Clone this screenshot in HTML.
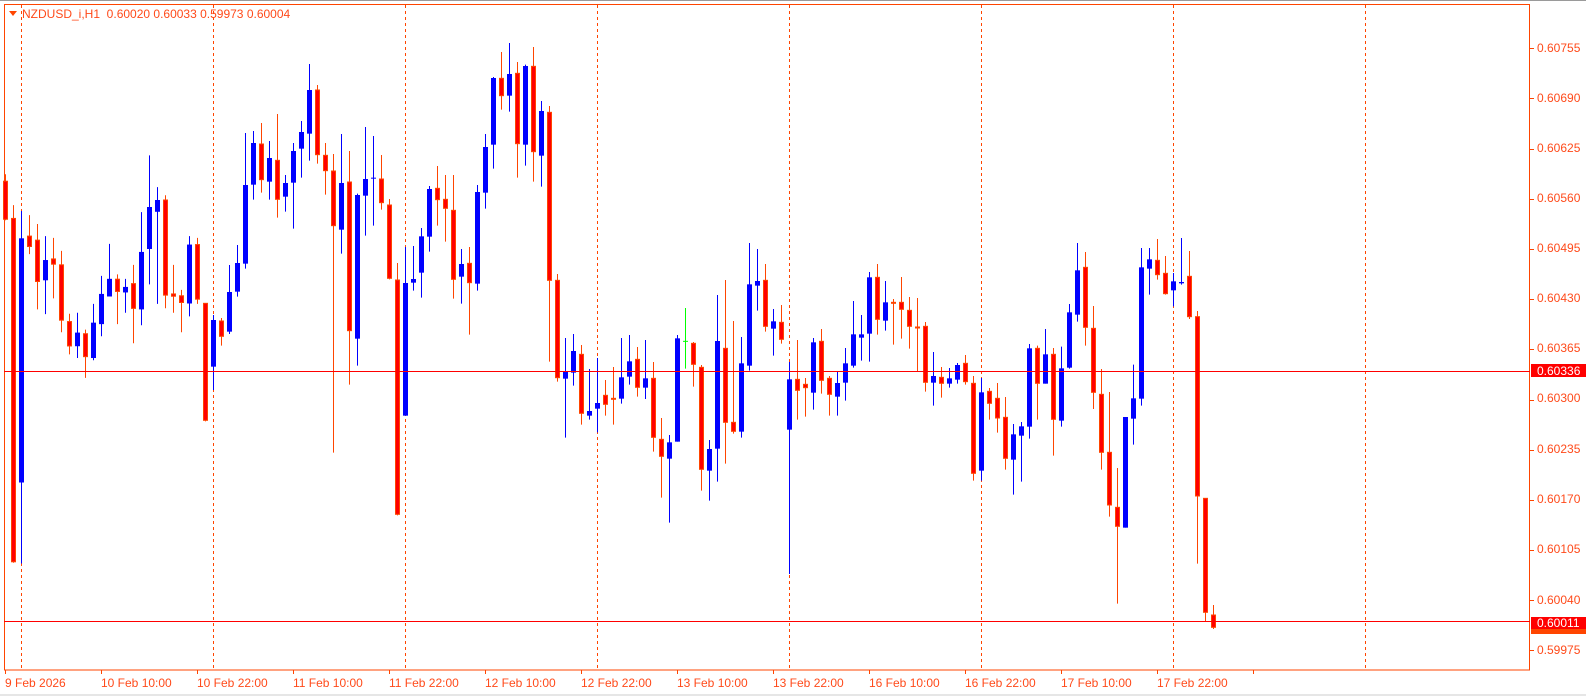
<!DOCTYPE html>
<html><head><meta charset="utf-8"><style>
html,body{margin:0;padding:0;background:#fff;width:1586px;height:696px;overflow:hidden;font-family:"Liberation Sans",sans-serif;}
.t{position:absolute;font-size:12px;color:#ff4a1a;white-space:nowrap;line-height:14px;}
</style></head><body>
<svg id="s" width="1586" height="696" style="position:absolute;left:0;top:0" xmlns="http://www.w3.org/2000/svg">
<rect x="0" y="0" width="1586" height="1" fill="#9a9a9a"/>
<rect x="0" y="694" width="1586" height="2" fill="#e6e6e6"/>
<rect x="4.5" y="4.5" width="1525" height="665.5" fill="none" stroke="#ff4500" stroke-width="1"/>
<g id="grid" stroke="#ff4500" stroke-width="1" stroke-dasharray="3,3"></g>
<g id="c"></g>
<line x1="4" y1="371.5" x2="1530" y2="371.5" stroke="#ff0000"/>
<line x1="4" y1="621.5" x2="1530" y2="621.5" stroke="#ff0000"/>
<g id="ticks" stroke="#ff4500"></g>
<polygon points="9,11 17,11 13,16" fill="#ff4500"/>
<rect x="1531" y="364" width="55" height="13" fill="#ff0000"/>
<rect x="1531" y="622" width="55" height="12" fill="#ff4500"/>
<rect x="1531" y="617" width="55" height="12" fill="#ff0000"/>
</svg>
<div class="t" style="left:22px;top:7px">NZDUSD_i,H1&nbsp; 0.60020 0.60033 0.59973 0.60004</div>
<div class="t" style="left:1537px;top:41px">0.60755</div>
<div class="t" style="left:1537px;top:91px">0.60690</div>
<div class="t" style="left:1537px;top:141px">0.60625</div>
<div class="t" style="left:1537px;top:191px">0.60560</div>
<div class="t" style="left:1537px;top:241px">0.60495</div>
<div class="t" style="left:1537px;top:291px">0.60430</div>
<div class="t" style="left:1537px;top:341px">0.60365</div>
<div class="t" style="left:1537px;top:391px">0.60300</div>
<div class="t" style="left:1537px;top:442px">0.60235</div>
<div class="t" style="left:1537px;top:492px">0.60170</div>
<div class="t" style="left:1537px;top:542px">0.60105</div>
<div class="t" style="left:1537px;top:593px">0.60040</div>
<div class="t" style="left:1537px;top:643px">0.59975</div>
<div class="t" style="left:1537px;top:364px;color:#fff">0.60336</div>
<div class="t" style="left:1537px;top:616px;color:#fff">0.60011</div>
<div class="t" style="left:5px;top:676px">9 Feb 2026</div>
<div class="t" style="left:101px;top:676px">10 Feb 10:00</div>
<div class="t" style="left:197px;top:676px">10 Feb 22:00</div>
<div class="t" style="left:293px;top:676px">11 Feb 10:00</div>
<div class="t" style="left:389px;top:676px">11 Feb 22:00</div>
<div class="t" style="left:485px;top:676px">12 Feb 10:00</div>
<div class="t" style="left:581px;top:676px">12 Feb 22:00</div>
<div class="t" style="left:677px;top:676px">13 Feb 10:00</div>
<div class="t" style="left:773px;top:676px">13 Feb 22:00</div>
<div class="t" style="left:869px;top:676px">16 Feb 10:00</div>
<div class="t" style="left:965px;top:676px">16 Feb 22:00</div>
<div class="t" style="left:1061px;top:676px">17 Feb 10:00</div>
<div class="t" style="left:1157px;top:676px">17 Feb 22:00</div>
<script>
var NS="http://www.w3.org/2000/svg";
function el(p,n,a){var e=document.createElementNS(NS,n);for(var k in a)e.setAttribute(k,a[k]);p.appendChild(e);return e;}
var g=document.getElementById('grid');
for(var i=0;i<8;i++){var x=21.5+192*i;el(g,'line',{x1:x,y1:5,x2:x,y2:670});}
var tk=document.getElementById('ticks');
for(var i=0;i<13;i++){var y=Math.round(48.3+50.18*i)+0.5;el(tk,'line',{x1:1530,y1:y,x2:1534,y2:y});}
for(var i=0;i<14;i++){var x=5.5+96*i;el(tk,'line',{x1:x,y1:670,x2:x,y2:674});}
var groups=[
[0,2.715,0,[
['r',473,492,598,598],['r',557,593,1528,1528],['b',573,647,1310,1530],['r',584,641,672,690],['r',608,652,767,840],
['b',641,706,761,853],['r',646,703,720,810],['r',681,719,872,902],['r',852,873,942,962],['b',849,903,940,972],
['r',895,906,971,1026],['b',825,876,972,978],['b',749,798,880,913],['b',662,757,805,805],['r',745,758,794,880],
['b',757,779,794,849],['r',719,770,840,932],['b',576,684,840,883],['b',422,562,676,772],['b',508,543,575,825],
['r',530,543,804,837],['r',719,798,807,849],['r',787,803,824,902],['b',641,664,824,859],['r',646,664,815,825]]],
[30,3,25,[
['r',820,820,1174,1174],['b',855,870,1010,1080],['r',864,873,922,947],['b',705,786,905,912],['b',645,699,785,800],
['b',309,465,701,716],['b',303,339,464,509],['r',279,342,452,488],['b',333,384,455,509],['r',252,391,511,563],
['b',435,459,500,545],['b',339,363,458,596],['b',273,306,356,443],['b',102,180,311,392],['r',165,180,377,401],
['r',339,376,425,494],['r',372,423,590,1268],['b',312,459,599,671],['r',363,456,905,1064],['b',491,495,926,1007],
['b',291,447,497,617],['b',318,443,446,587],['r',375,447,521,539],['r',507,525,748,748],['r',699,750,1456,1456]]],
[30,3,50,[
['b',651,759,1157,1157],['b',648,747,758,782],['b',594,619,728,803],['b',468,477,620,665],['r',408,475,512,587],
['r',435,508,538,635],['r',435,541,751,806],['b',657,702,740,821],['r',651,700,761,914],['b',465,486,761,782],
['b',312,351,488,536],['b',141,144,344,416],['r',66,145,200,239],['b',39,132,197,245],['r',96,130,344,443],
['b',104,108,344,407],['r',51,109,368,455],['b',213,243,377,470],['r',228,247,754,995],['r',732,751,1046,1055],
['b',924,1024,1046,1223],['b',912,963,1028,1067],['r',945,973,1153,1184],['b',1017,1143,1157,1169]]],
[200,3,74,[
['b',474,609,626,697],['r',540,586,616,647],['r',501,595,598,674],['b',414,532,596,611],['b',405,484,530,554],
['r',441,478,565,590],['b',420,535,563,597],['r',486,535,715,755],['r',654,718,772,893],['b',705,727,776,968],
['b',405,415,725,725],['g',324,424,426,506],['r',426,430,496,560],['r',495,502,811,872],['b',720,747,812,902],
['b',285,423,746,845],['r',240,445,670,791],['r',363,667,697,701],['b',411,490,695,713],['b',129,253,497,512],
['b',147,243,257,332],['r',192,241,382,395],['b',327,364,386,467],['r',315,367,421,431],['b',486,538,689,1122]]],
[200,3,99,[
['r',420,538,574,659],['r',534,553,566,650],['b',414,427,578,629],['r',387,424,544,581],['r',528,535,586,647],
['b',513,549,590,647],['b',444,490,548,602],['b',303,403,497,503],['b',345,403,413,482],['b',216,232,401,485],
['r',192,232,361,404],['b',243,307,362,392],['r',297,307,313,434],['r',231,307,331,416],['r',291,331,382,446],
['r',294,381,383,516],['r',366,379,550,575],['b',456,528,548,617],['r',501,532,553,593],['b',504,535,551,563],
['b',489,495,539,551],['r',465,490,548,554],['r',528,550,823,842],['b',534,577,812,842],['r',564,574,613,659]]],
[200,3,124,[
['r',549,595,657,698],['r',591,652,778,809],['b',672,703,779,884],['b',666,679,707,845],['b',432,445,680,716],
['r',437,445,553,659],['b',387,463,551,551],['r',444,463,661,767],['b',440,505,662,680],['b',312,337,503,506],
['b',129,211,344,365],['r',156,202,385,437],['r',318,385,580,627],['r',507,583,760,809],['r',576,757,918,950],
['r',804,922,982,1211],['b',651,651,983,983],['b',494,595,656,734],['b',144,202,596,617],['b',144,178,206,284],
['r',117,181,227,239],['r',168,220,284,284],['b',219,244,271,319],['b',114,246,250,254],['r',153,229,353,357],
['r',333,350,891,1091],['r',895,895,1240,1265]]],
[230,3,151,[['r',1125,1155,1195,1197]]]
];
var c=document.getElementById('c');
groups.forEach(function(G){
 var oy=G[0],sc=G[1],st=G[2];
 G[3].forEach(function(d,j){
  var i=st+j, cx=Math.round(21.3+(i-2)*8)+0.5;
  var f=function(v){return oy+v/sc;};
  var h=f(d[1]),bt=f(d[2]),bb=f(d[3]),l=f(d[4]);
  var col=d[0]=='b'?'#0000ff':(d[0]=='g'?'#00ff00':'#ff4500');
  el(c,'line',{x1:cx,y1:h,x2:cx,y2:l,stroke:col,'stroke-width':1});
  var hh=Math.max(bb-bt,1);
  if(d[0]=='b'){el(c,'rect',{x:cx-2.5,y:bt,width:5,height:hh,fill:'#0000ff'});}
  else if(d[0]=='g'){el(c,'line',{x1:cx-2.5,y1:bt,x2:cx+2.5,y2:bt,stroke:col});}
  else{el(c,'rect',{x:cx-2,y:bt,width:4,height:Math.max(hh-1,1),fill:'#ff0000',stroke:'#ff4500','stroke-width':1});}
 });
});
</script>
</body></html>
